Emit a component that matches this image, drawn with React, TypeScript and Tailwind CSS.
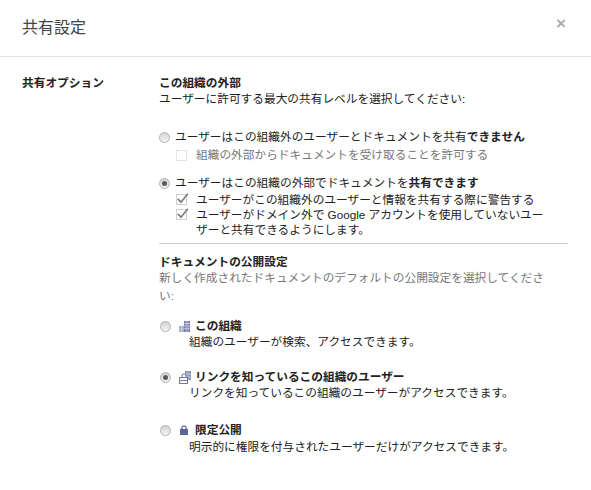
const font = "font-['Liberation_Sans','Noto_Sans_CJK_JP',sans-serif]";

function Radio({ checked }: { checked?: boolean }) {
  return (
    <span className="flex h-[11px] w-[11px] shrink-0 items-center justify-center rounded-full border border-[#b0b0b0] bg-gradient-to-b from-[#d4d4d4] to-[#f4f4f4]">
      {checked && <span className="h-[5px] w-[5px] rounded-full bg-[#5a5a5a]" />}
    </span>
  );
}

function Check({ checked, disabled }: { checked?: boolean; disabled?: boolean }) {
  return (
    <span className={`relative block h-[11px] w-[11px] shrink-0 border bg-white ${disabled ? "border-[#e4e4e4]" : "border-[#d0d0d0]"}`}>
      {checked && (
        <svg className="absolute -left-px -top-[3px]" width="14" height="14" viewBox="0 0 14 14">
          <path d="M1.800 6.800 L5 10.200 L11.800 1.800" fill="none" stroke="#808080" strokeWidth="1.800" />
        </svg>
      )}
    </span>
  );
}

function OrgIcon() {
  return (
    <svg width="12" height="11" viewBox="0 0 12 11" className="shrink-0">
      <rect x="5" y="0" width="6" height="11" fill="#6f78a8" />
      <rect x="0" y="5" width="5" height="6" fill="#a3a9c8" />
      <path d="M5 2.500H11M5 5H11M5 7.500H11M0 8H5M7 0V11M9 0V11M2.500 5V11" stroke="#d5d8e6" strokeWidth="0.700" />
    </svg>
  );
}

function LinkOrgIcon() {
  return (
    <svg width="13" height="13" viewBox="0 0 13 13" className="shrink-0">
      <rect x="6" y="0" width="6" height="9" fill="#7d85b0" />
      <path d="M6 3H12M6 6H12M8 0V9M10 0V9" stroke="#d5d8e6" strokeWidth="0.700" />
      <path d="M3 6.500V5a2 2 0 0 1 4 0V6.500" fill="#fff" stroke="#6f78a8" />
      <rect x="0.500" y="6.500" width="8" height="6" fill="#fff" stroke="#6f78a8" />
      <path d="M0.500 9.500H8.500" stroke="#6f78a8" />
    </svg>
  );
}

function LockIcon() {
  return (
    <svg width="8" height="10" viewBox="0 0 8 10" className="shrink-0">
      <rect x="0" y="4" width="8" height="6" fill="#5c6496" />
      <path d="M2 4.500V2.800a2 2 0 0 1 4 0V4.500" fill="none" stroke="#5c6496" strokeWidth="1.300" />
    </svg>
  );
}

export default function App() {
  return (
    <div className={`h-[490px] w-[591px] overflow-hidden bg-white text-[11.7px] leading-[16px] text-[#222222] ${font}`}>
      <header className="flex h-[57px] items-start justify-between border-b border-[#e5e5e5] pl-[22px] pr-[25px] pt-[17px]">
        <h1 className="text-[16px] leading-[22px] text-[#444444]">共有設定</h1>
        <span className="mt-[-4px] text-[17px] font-bold leading-[22px] text-[#aaaaaa]">×</span>
      </header>
      <main className="flex pl-[22px] pt-[18px]">
        <div className="w-[137px] shrink-0 font-bold">共有オプション</div>
        <div className="w-[409px] shrink-0">
          <section>
            <div className="font-bold">この組織の外部</div>
            <div>ユーザーに許可する最大の共有レベルを選択してください:</div>
            <div className="mt-[22px] flex items-center gap-[5px]">
              <Radio />
              <span>ユーザーはこの組織外のユーザーとドキュメントを共有<b>できません</b></span>
            </div>
            <div className="mt-[2px] flex items-center gap-[9px] pl-[17px] text-[#777777]">
              <Check disabled />
              <span>組織の外部からドキュメントを受け取ることを許可する</span>
            </div>
            <div className="mt-[12px] flex items-center gap-[5px]">
              <Radio checked />
              <span>ユーザーはこの組織の外部でドキュメントを<b>共有できます</b></span>
            </div>
            <div className="mt-px flex items-center gap-[9px] pl-[17px] leading-[15px]">
              <Check checked />
              <span>ユーザーがこの組織外のユーザーと情報を共有する際に警告する</span>
            </div>
            <div className="flex items-start gap-[9px] pl-[17px] leading-[15px]">
              <span className="shrink-0 pt-[2px]"><Check checked /></span>
              <span className="block w-[352px]">ユーザーがドメイン外で Google アカウントを使用していないユーザーと共有できるようにします。</span>
            </div>
          </section>
          <hr className="mt-[6px] border-[#cccccc]" />
          <section className="mt-[10px]">
            <div className="font-bold leading-[15px]">ドキュメントの公開設定</div>
            <div className="w-[392px] leading-[18px] text-[#777777]">新しく作成されたドキュメントのデフォルトの公開設定を選択してください:</div>
            <div className="mt-[13px] flex items-center pl-px">
              <Radio />
              <span className="ml-[8px] flex w-[16px] shrink-0"><OrgIcon /></span>
              <b>この組織</b>
            </div>
            <div className="pl-[30px]">組織のユーザーが検索、アクセスできます。</div>
            <div className="mt-[19px] flex items-center pl-px">
              <Radio checked />
              <span className="ml-[8px] flex w-[16px] shrink-0"><LinkOrgIcon /></span>
              <b>リンクを知っているこの組織のユーザー</b>
            </div>
            <div className="pl-[30px]">リンクを知っているこの組織のユーザーがアクセスできます。</div>
            <div className="mt-[21px] flex items-center pl-px">
              <Radio />
              <span className="ml-[9px] flex w-[15px] shrink-0"><LockIcon /></span>
              <b>限定公開</b>
            </div>
            <div className="mt-px pl-[30px]">明示的に権限を付与されたユーザーだけがアクセスできます。</div>
          </section>
        </div>
      </main>
    </div>
  );
}
